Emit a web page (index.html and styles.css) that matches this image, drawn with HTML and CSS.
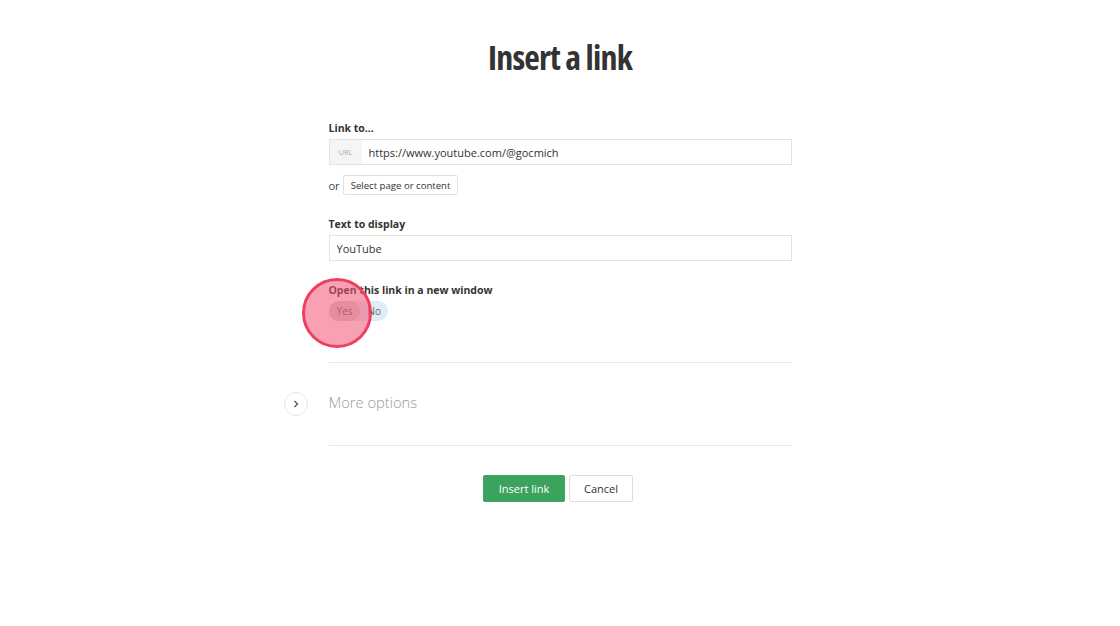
FILE: index.html
```html
<!DOCTYPE html>
<html lang="en">
<head>
  <meta charset="UTF-8" />
  <title>Insert a link</title>
  <link rel="stylesheet" href="styles.css">
</head>
<body>

<div class="dialog">
  <h1 class="title">Insert a link</h1>

  <!-- Link target -->
  <div class="field">
    <label class="label">Link to...</label>
    <div class="input-group">
      <span class="addon">URL</span>
      <input class="input" type="text" value="https://www.youtube.com/@gocmich" />
    </div>
    <div class="or-row">
      <span>or</span>
      <button class="small-btn">Select page or content</button>
    </div>
  </div>

  <!-- Display text -->
  <div class="field">
    <label class="label">Text to display</label>
    <input class="input input-plain" type="text" value="YouTube" />
  </div>

  <!-- New window toggle -->
  <div class="field toggle-field">
    <label class="label">Open this link in a new window</label>
    <div class="toggle">
      <span class="toggle-opt selected">Yes</span>
      <span class="toggle-opt">No</span>
    </div>
    <div class="click-marker"></div>
  </div>

  <div class="more-options">
    <span class="chevron">
      <svg width="10" height="10" viewBox="0 0 10 10"><path d="M3.5 2 L6.5 5 L3.5 8" fill="none" stroke="#555" stroke-width="1.3"/></svg>
    </span>
    <span class="more-text">More options</span>
  </div>

  <div class="actions">
    <button class="btn btn-primary">Insert link</button>
    <button class="btn btn-default">Cancel</button>
  </div>
</div>

</body>
</html>
```

FILE: styles.css
```css
* {
  margin: 0; padding: 0; box-sizing: border-box;
}
body {
  font-family: 'Open Sans', 'Liberation Sans', sans-serif;
  background: #fff;
  color: #333;
}
.dialog {
  width: 463px;
  margin: 0 auto;
  padding-top: 35px;
}
.title {
  font-family: 'Open Sans', 'DejaVu Sans Condensed', sans-serif;
  font-stretch: 75%;
  font-size: 34px;
  font-weight: 700;
  letter-spacing: -0.8px;
  text-align: center;
  color: #333;
  line-height: 44px;
  margin-bottom: 42px;
}
.field {
  margin-bottom: 22px;
}
.label {
  display: block;
  font-size: 10.5px;
  font-weight: 700;
  color: #333;
  line-height: 14px;
  margin-bottom: 4px;
}
.input-group {
  display: flex;
  height: 26px;
  border: 1px solid #e3e3e3;
}
.addon {
  width: 32px;
  background: #f5f5f5;
  color: #aaa;
  font-size: 7.5px;
  display: flex;
  align-items: center;
  justify-content: center;
}
.input {
  flex: 1;
  border: none;
  outline: none;
  font-family: inherit;
  font-size: 11px;
  color: #333;
  padding: 0 7px;
}
.input-plain {
  width: 100%;
  height: 26px;
  border: 1px solid #e3e3e3;
}
.or-row {
  display: flex;
  align-items: center;
  gap: 3px;
  margin-top: 10px;
  font-size: 11px;
  color: #444;
}
.small-btn {
  font-family: inherit;
  font-size: 9.6px;
  color: #333;
  background: #fff;
  border: 1px solid #e0e0e0;
  border-radius: 2px;
  height: 20px;
  padding: 0 7px;
}
.toggle-field {
  position: relative;
  margin-top: 22px;
  padding-bottom: 41px;
  margin-bottom: 0;
  border-bottom: 1px solid #e8e8e8;
}
.toggle {
  display: flex;
  width: fit-content;
  background: #deedf8;
  border-radius: 10px;
  height: 20px;
}
.toggle-opt {
  display: flex;
  align-items: center;
  padding: 0 7px 0 7px;
  font-size: 10px;
  color: #666;
  border-radius: 10px;
}
.toggle-opt.selected {
  background: #d6d6d6;
  padding: 0 8px 0 8px;
}
.click-marker {
  position: absolute;
  left: -27px;
  top: -5px;
  width: 70px;
  height: 70px;
  border-radius: 50%;
  background: rgba(242, 84, 117, 0.55);
  border: 3px solid #ee3e62;
}
.more-options {
  display: flex;
  align-items: center;
  gap: 21px;
  margin-left: -45px;
  height: 83px;
  border-bottom: 1px solid #e8e8e8;
  position: relative;
}
.more-options::after {
  content: '';
  position: absolute;
  left: 0;
  width: 45px;
  bottom: -1px;
  height: 1px;
  background: #fff;
}
.chevron {
  width: 24px;
  height: 24px;
  border: 1px solid #e6e6e6;
  border-radius: 50%;
  display: flex;
  align-items: center;
  justify-content: center;
}
.more-text {
  font-size: 14.7px;
  font-weight: 300;
  color: #999;
  margin-bottom: 4px;
}
.actions {
  display: flex;
  justify-content: center;
  gap: 4px;
  margin-top: 29px;
  padding-right: 4px;
}
.btn {
  font-family: inherit;
  font-size: 11px;
  height: 27px;
  border-radius: 2px;
  cursor: pointer;
}
.btn-primary {
  background: #3ba35e;
  color: #fff;
  border: 1px solid #3ba35e;
  width: 82px;
}
.btn-default {
  background: #fff;
  color: #333;
  border: 1px solid #ddd;
  width: 64px;
}
```
